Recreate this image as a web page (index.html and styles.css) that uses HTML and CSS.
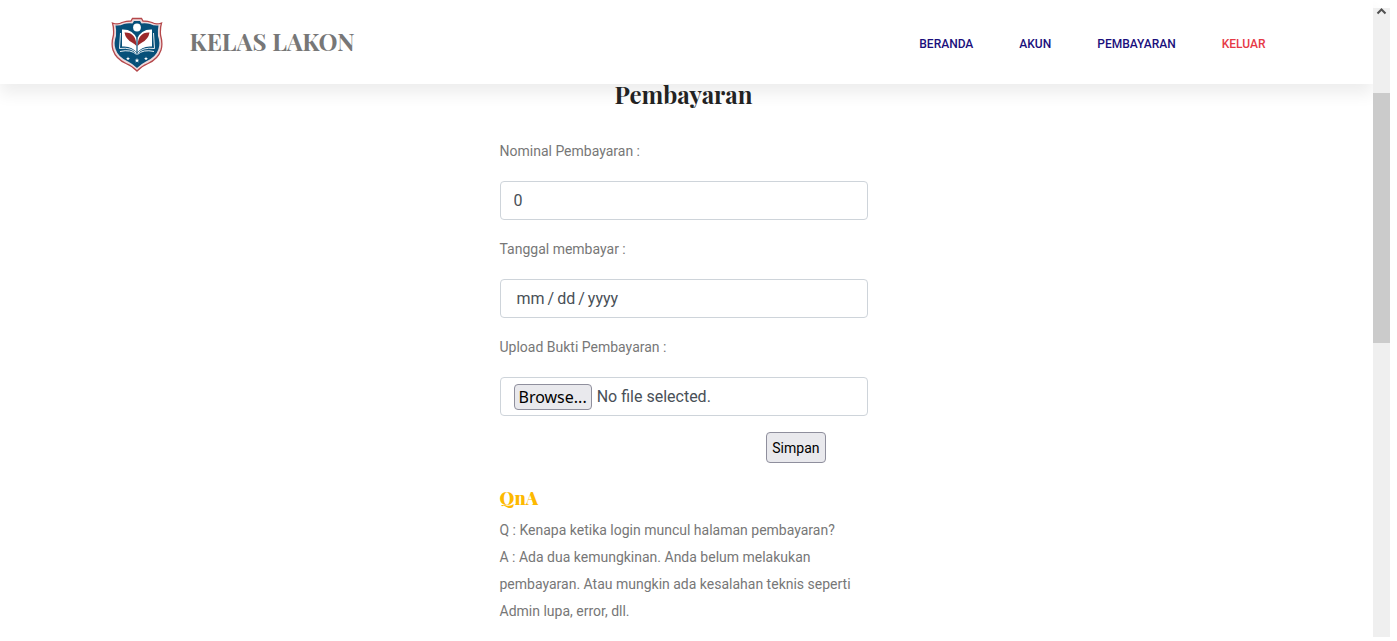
FILE: index.html
```html
<!DOCTYPE html>
<html lang="id">
<head>
<meta charset="utf-8">
<title>Kelas Lakon</title>
<link rel="stylesheet" href="styles.css">
</head>
<body>
<div class="page">
  <header class="header">
    <div class="header-inner">
      <a class="brand" href="#">
        <svg class="logo" viewBox="0 0 52 56" aria-hidden="true">
          <path d="M1.500 6Q7 8 11 5.500Q15 4 20 4L21.500 1.500H30.500L32 4Q37 4 41 5.500Q45 8 50.500 6Q49 11 49.500 18Q52 27 50 33Q47 42 37 46.500Q30 49.500 26 54Q22 49.500 15 46.500Q5 42 2 33Q0 27 2.500 18Q3 11 1.500 6Z" fill="#ecd9dc" stroke="#b5474a" stroke-width="1.300"/>
          <path d="M4.500 8.500Q9 9 13 7Q17 6 21.500 6.500L23 4H29L30.500 6.500Q35 6 39 7Q43 9 47.500 8.500Q46.500 13 47 19Q49.500 26 47.500 32Q45 40 35 44.500Q30 47 26 51Q22 47 17 44.500Q7 40 4.500 32Q2.500 26 5 19Q5.500 13 4.500 8.500Z" fill="#075079"/>
          <circle cx="26" cy="10.500" r="3.900" fill="#fff"/>
          <path d="M11 12.500Q22 12 26 22Q30 12 41 12.500V29.500Q31 28.500 26 36Q21 28.500 11 29.500Z" fill="#fff"/>
          <path d="M13.500 15.500Q25 15 25.500 29Q24 27 21 25.500Q14.500 22 13.500 15.500ZM38.500 15.500Q27 15 26.500 29Q28 27 31 25.500Q37.500 22 38.500 15.500Z" fill="#9c292b"/>
          <path d="M26 21V37" stroke="#075079" stroke-width="1.200"/>
          <path d="M9.500 16L8.500 31.500Q21 30 25.500 36.500M9 34.500Q20 32 25.500 37.500M42.500 16L43.500 31.500Q31 30 26.500 36.500M43 34.500Q32 32 26.500 37.500" fill="none" stroke="#fff" stroke-width=".9"/>
          <path d="M26 41L26.600 42.700H28.300L27 43.800L27.500 45.500L26 44.500L24.500 45.500L25 43.800L23.700 42.700H25.400ZM17 39.500L17.500 41H19L17.800 41.900L18.200 43L17 42.400L15.800 43L16.200 41.900L15 41H16.500ZM35 39.500L35.500 41H37L35.800 41.900L36.200 43L35 42.400L33.800 43L34.200 41.900L33 41H34.500Z" fill="#fff"/>
        </svg>
        <span class="brand-name">KELAS LAKON</span>
      </a>
      <nav class="nav">
        <a href="#">BERANDA</a>
        <a href="#">AKUN</a>
        <a href="#">PEMBAYARAN</a>
        <a class="logout" href="#">KELUAR</a>
      </nav>
    </div>
  </header>
  <main class="main">
    <div class="column">
      <h1 class="title">Pembayaran</h1>
      <form class="form">
        <div class="field">
          <label class="label" for="nominal">Nominal Pembayaran :</label>
          <input class="control" id="nominal" type="text" inputmode="numeric" value="0">
        </div>
        <div class="field">
          <label class="label" for="tanggal">Tanggal membayar :</label>
          <input class="control date" id="tanggal" type="date">
        </div>
        <div class="field">
          <label class="label" for="bukti">Upload Bukti Pembayaran :</label>
          <label class="control file">
            <input class="file-input" id="bukti" type="file">
            <span class="browse">Browse...</span>
            <span>No file selected.</span>
          </label>
        </div>
        <div class="actions"><button class="save" type="button">Simpan</button></div>
      </form>
      <section>
        <h2 class="qna">QnA</h2>
        <p class="text">Q : Kenapa ketika login muncul halaman pembayaran?</p>
        <p class="text">A : Ada dua kemungkinan. Anda belum melakukan pembayaran. Atau mungkin ada kesalahan teknis seperti Admin lupa, error, dll.</p>
      </section>
    </div>
  </main>
</div>
<div class="scrollbar" aria-hidden="true">
  <svg class="arrow" viewBox="0 0 17 8"><path d="M4.500 5.500L8.500 1.500L12.500 5.500" fill="none" stroke="#505050" stroke-width="2"/></svg>
  <div class="thumb"></div>
</div>
</body>
</html>
```
FILE: styles.css
```css
* { box-sizing: border-box; }
body {
  margin: 0;
  padding-right: 7px;
  height: 100vh;
  display: flex;
  overflow: hidden;
  background: #fff;
  color: #777;
  font: 14px/26px Roboto, sans-serif;
}
.page { flex: 1; min-width: 0; }
.header {
  background: #fff;
  box-shadow: 0 10px 15px rgba(0, 0, 0, 0.07);
}
.header-inner {
  max-width: 1160px;
  margin: 0 auto;
  padding: 17px 1px 11px 4px;
  display: flex;
  justify-content: space-between;
  align-items: center;
}
.brand {
  display: flex;
  align-items: center;
  gap: 27px;
  color: #777;
  text-decoration: none;
}
.logo { width: 52px; height: 56px; }
.brand-name {
  font: bold 24px/32px "Playfair Display", "Liberation Serif", serif;
  padding-bottom: 8px;
}
.nav { display: flex; gap: 46px; padding-bottom: 2px; }
.nav a {
  color: #1a0f7c;
  font-size: 12px;
  font-weight: 500;
  text-decoration: none;
}
.nav .logout { color: #e63946; }
.main { padding-right: 6px; }
.column { max-width: 368px; margin: 0 auto; }
.title {
  margin: 0 0 34px;
  color: #222;
  font: bold 24px/20px "Playfair Display", "Liberation Serif", serif;
  text-align: center;
}
.field { margin-bottom: 16px; }
.label { display: block; margin-bottom: 17px; }
.control {
  display: flex;
  align-items: center;
  width: 100%;
  height: 39px;
  padding: 0 13px;
  border: 1px solid #ced4da;
  border-radius: 4px;
  background: #fff;
  color: #495057;
  font: 16px/24px Roboto, sans-serif;
}
.date { padding-left: 15px; }
.date::-webkit-calendar-picker-indicator { display: none; }
.date::-webkit-datetime-edit-text { padding: 0 2px; }
.file { gap: 5px; position: relative; }
.file-input { position: absolute; inset: 0; width: 100%; opacity: 0; }
.browse {
  padding: 0 4px;
  border: 1px solid #8f8f9d;
  border-radius: 4px;
  background: #e9e9ed;
  color: #000;
  font-family: "Noto Sans", sans-serif;
}
.actions { display: flex; justify-content: flex-end; padding-right: 42px; }
.save {
  height: 31px;
  padding: 0 5px;
  border: 1px solid #8f8f9d;
  border-radius: 4px;
  background: #e9e9ed;
  color: #000;
  font: 14px/26px Roboto, sans-serif;
}
.qna {
  margin: 22px 0 6px;
  color: #fdb900;
  font: 900 18px/26px "Playfair Display", "Liberation Serif", serif;
}
.text { margin: 0; line-height: 27px; }
.scrollbar {
  width: 17px;
  margin: 8px 0 4px;
  background: #efefef;
}
.arrow { display: block; width: 17px; height: 8px; }
.thumb { height: 250px; margin-top: 77px; background: #cbcbcb; }
```
